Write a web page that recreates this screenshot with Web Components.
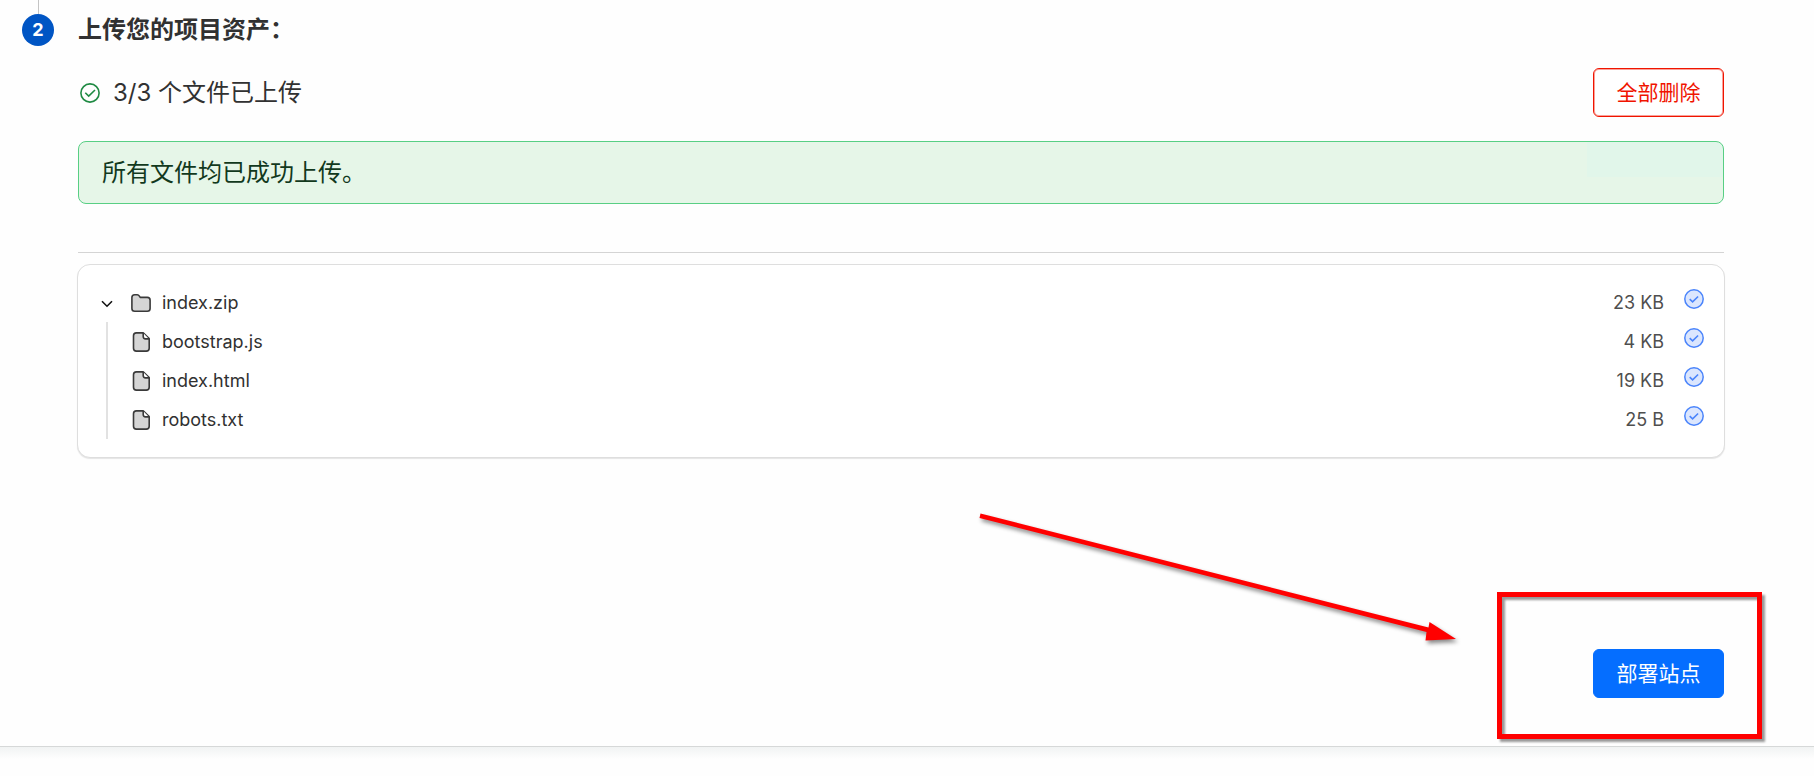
<!DOCTYPE html>
<html lang="zh-CN">
<head>
<meta charset="utf-8">
<title>上传您的项目资产</title>
<style>
  body {
    margin: 0;
    background: #fefefe;
    color: #313131;
    font: 24px/32px Inter, "Noto Sans CJK SC", sans-serif;
  }
</style>
</head>
<body>
<deploy-page></deploy-page>

<script>
const define = (name, html) => {
  const template = document.createElement('template');
  template.innerHTML = html;
  customElements.define(name, class extends HTMLElement {
    constructor() {
      super();
      this.attachShadow({ mode: 'open' }).append(template.content.cloneNode(true));
    }
  });
};

define('step-marker', `
  <style>
    :host { display: flex; flex-direction: column; align-items: center; width: 32px; }
    .line { width: 1px; height: 14px; background: #c4c4c4; }
    .dot {
      width: 32px; height: 32px; border-radius: 50%;
      background: #0055c4; color: #fff;
      font-size: 18px; font-weight: 700; text-align: center;
    }
  </style>
  <div class="line"></div>
  <div class="dot"><slot></slot></div>`);

define('ui-button', `
  <style>
    :host { display: block; }
    button {
      display: block; box-sizing: border-box; min-width: 131px; height: 49px; padding: 0 22px;
      border: 1px solid #f01400; border-radius: 6px;
      background: #fff; color: #f01400;
      box-shadow: inset 0 0 0 1px #f0140066;
      font: inherit; font-size: 21px; line-height: 32px; font-weight: 400;
    }
    :host([primary]) button { background: #056eff; border-color: #056eff; box-shadow: none; color: #fff; }
  </style>
  <button type="button"><slot></slot></button>`);

define('upload-status', `
  <style>
    :host { display: flex; align-items: center; gap: 13px; }
    svg { width: 20px; height: 20px; margin-left: 2px; }
    .label { flex: 1; }
  </style>
  <svg viewBox="0 0 20 20" fill="none" stroke="#1f8a43" aria-hidden="true">
    <circle cx="10" cy="10" r="9.1" stroke-width="1.6"/>
    <path d="M5.3 9.8 8.7 13.1 15 7" stroke-width="1.6"/>
  </svg>
  <div class="label"><slot></slot></div>
  <slot name="action"></slot>`);

define('success-banner', `
  <style>
    :host {
      display: block; padding: 15px 23px 14px;
      border: 1px solid #58cf84; border-radius: 8px;
      background: linear-gradient(#e1f6ea, #e1f6ea) right top / 136px 35px no-repeat, #e6f6e8;
      color: #12391d;
    }
  </style>
  <slot></slot>`);

define('file-icon', `
  <style>
    :host { display: block; width: 20px; height: 20px; }
    svg { display: block; width: 20px; height: 20px; }
    .folder, :host([folder]) .file { display: none; }
    :host([folder]) .folder { display: block; }
  </style>
  <svg class="folder" viewBox="0 0 20 20" fill="#d5d5d5" stroke="#3a3a3a" stroke-width="1.6" stroke-linejoin="round" aria-hidden="true">
    <path d="M.9 4.6Q.9 1.8 3.7 1.8H6.2Q7.6 1.8 8.2 2.9L9.2 4.4H16.3Q19.1 4.4 19.1 7.2V15.5Q19.1 18.3 16.3 18.3H3.700Q.9 18.3.9 15.500Z"/>
  </svg>
  <svg class="file" viewBox="0 0 20 20" fill="#d5d5d5" stroke="#3a3a3a" stroke-width="1.6" stroke-linejoin="round" aria-hidden="true">
    <path d="M5.400 .9H12.200L18.200 6.700V16.200Q18.200 19.100 15.300 19.100H5.400Q2.500 19.100 2.500 16.200V3.800Q2.500.9 5.400.9Z"/>
    <path d="M12.200 1V4.600Q12.200 6.900 14.500 6.900H18" fill="#fff"/>
  </svg>`);

define('file-row', `
  <style>
    :host {
      display: flex; align-items: center; height: 39px;
      font-size: 18px; line-height: 24px;
    }
    .name { flex: 1; margin-left: 11px; }
    .size { color: #4f4f4f; }
    .check { align-self: flex-start; width: 20px; height: 20px; margin: 6px 0 0 20px; }
  </style>
  <slot name="icon"></slot>
  <div class="name"><slot></slot></div>
  <div class="size"><slot name="size"></slot></div>
  <svg class="check" viewBox="0 0 20 20" fill="none" stroke="#4a84fb" aria-hidden="true">
    <circle cx="10" cy="10" r="9.2" fill="#dbe6fe" stroke-width="1.5"/>
    <path d="M5.7 10.2 8.6 12.9 14.1 7.5" stroke-width="1.6"/>
  </svg>`);

define('file-tree', `
  <style>
    :host {
      display: block; margin: 0 -1px; padding: 18px 20px 18px 23px;
      border: 1px solid #dedede; border-radius: 13px;
      box-shadow: 0 1px 1px #0000001a; background: #fff;
    }
    .head { display: flex; align-items: center; }
    .toggle {
      display: block; width: 12px; height: 12px; padding: 0; border: 0;
      background: none; color: #111;
    }
    .toggle svg { display: block; width: 12px; height: 12px; }
    .head ::slotted(file-row) { flex: 1; margin-left: 18px; }
    .items { margin-left: 5px; padding-left: 23px; border-left: 2px solid #e2e2e2; }
  </style>
  <div class="head">
    <button class="toggle" type="button" aria-label="折叠" aria-expanded="true">
      <svg viewBox="0 0 12 12" fill="none" stroke="currentColor" stroke-width="1.6"><path d="M1 4.2 6 9.2 11 4.2"/></svg>
    </button>
    <slot name="root"></slot>
  </div>
  <div class="items"><slot></slot></div>`);

define('highlight-box', `
  <style>
    :host {
      position: absolute; right: -38px; bottom: -41px; box-sizing: border-box;
      width: 265px; height: 147px; border: 5px solid #f00;
      filter: drop-shadow(3px 3px 1px #0006); pointer-events: none;
    }
  </style>`);

define('pointer-arrow', `
  <style>
    :host { position: absolute; right: 262px; bottom: 48px; pointer-events: none; }
    svg { display: block; width: 490px; height: 140px; overflow: visible; filter: drop-shadow(2px 3px 2px #0007); }
  </style>
  <svg viewBox="0 0 490 140" fill="#f00" aria-hidden="true">
    <path d="M8.500 3.500 7.500 8 454.500 122 453.500 130.500 484 129 457.500 112 456.500 117.500Z"/>
  </svg>`);

define('deploy-page', `
  <style>
    :host { display: block; }
    .step { display: flex; gap: 24px; padding: 0 90px 48px 22px; border-bottom: 1px solid #d6d8d8; }
    .content { flex: 1; min-width: 0; }
    h2 { margin: 14px 0 22px; font-size: 24px; line-height: 32px; font-weight: 700; }
    success-banner { margin-top: 24px; }
    hr { height: 1px; margin: 48px 0 11px; border: 0; background: #d4d4d4; }
    .actions { position: relative; display: flex; justify-content: flex-end; margin-top: 191px; }
    .edge { height: 12px; background: linear-gradient(#f1f3f3, #fefefe); }
  </style>
  <section class="step">
    <step-marker>2</step-marker>
    <div class="content">
      <h2>上传您的项目资产：</h2>
      <upload-status>3/3 个文件已上传<ui-button slot="action">全部删除</ui-button></upload-status>
      <success-banner role="status">所有文件均已成功上传。</success-banner>
      <hr>
      <file-tree>
        <file-row slot="root"><file-icon slot="icon" folder></file-icon>index.zip<span slot="size">23 KB</span></file-row>
        <file-row><file-icon slot="icon"></file-icon>bootstrap.js<span slot="size">4 KB</span></file-row>
        <file-row><file-icon slot="icon"></file-icon>index.html<span slot="size">19 KB</span></file-row>
        <file-row><file-icon slot="icon"></file-icon>robots.txt<span slot="size">25 B</span></file-row>
      </file-tree>
      <div class="actions">
        <ui-button primary>部署站点</ui-button>
        <highlight-box></highlight-box>
        <pointer-arrow></pointer-arrow>
      </div>
    </div>
  </section>
  <div class="edge"></div>`);
</script>
</body>
</html>
